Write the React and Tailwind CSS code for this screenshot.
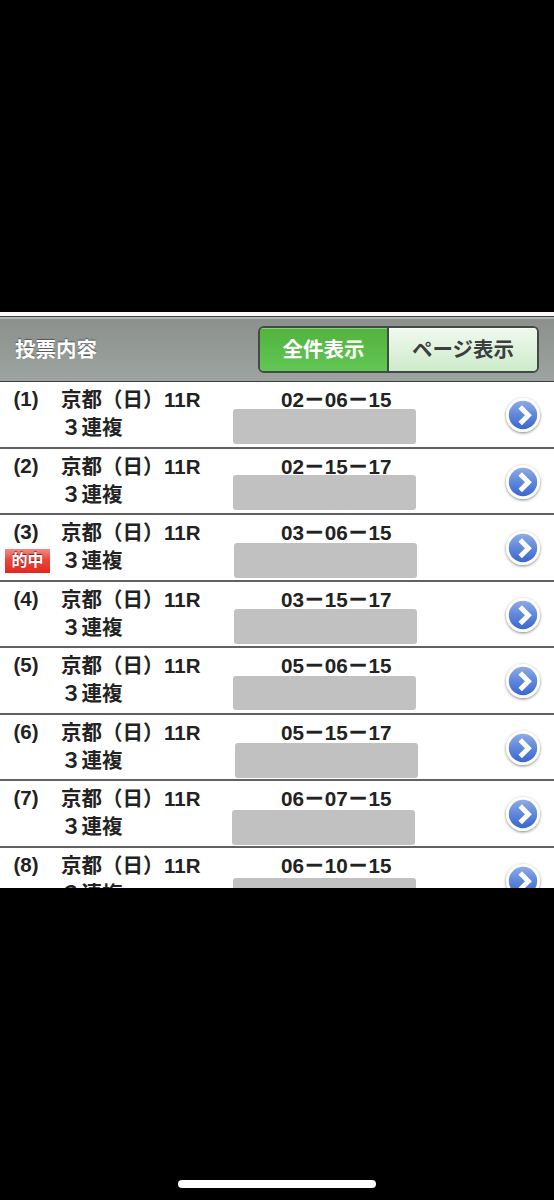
import React from 'react';

const tickets = [
  { no: 1, numbers: ['02', '06', '15'], mask: 'ml-[233.4px] mt-[-1px]' },
  { no: 2, numbers: ['02', '15', '17'], mask: 'ml-[233px] mt-[-1.5px]' },
  { no: 3, numbers: ['03', '06', '15'], mask: 'ml-[234px] mt-0', hit: true },
  { no: 4, numbers: ['03', '15', '17'], mask: 'ml-[234.4px] mt-[-0.5px]' },
  { no: 5, numbers: ['05', '06', '15'], mask: 'ml-[233.4px] mt-[-0.5px]' },
  { no: 6, numbers: ['05', '15', '17'], mask: 'ml-[235px] mt-[0.5px]' },
  { no: 7, numbers: ['06', '07', '15'], mask: 'ml-[231.5px] mt-px' },
  { no: 8, numbers: ['06', '10', '15'], mask: 'ml-[233.4px] mt-[2.5px]' },
];

const ArrowButton = () => (
  <svg width="42" height="44" viewBox="0 0 42 44" className="block">
    <defs>
      <linearGradient id="ball" x1="0" y1="0" x2="0" y2="1">
        <stop offset="0" stopColor="#8fabe6" />
        <stop offset="0.5" stopColor="#5f87da" />
        <stop offset="1" stopColor="#3a67d0" />
      </linearGradient>
      <filter id="shade" x="-20%" y="-20%" width="140%" height="150%">
        <feDropShadow dx="0" dy="1" stdDeviation="1.5" floodColor="#000" floodOpacity="0.5" />
      </filter>
    </defs>
    <circle cx="21" cy="20" r="17" fill="#fff" filter="url(#shade)" />
    <circle cx="21" cy="20" r="14.2" fill="url(#ball)" />
    <path d="M18.2 12 L26.4 20.2 L18.2 28.4" fill="none" stroke="#fff" strokeWidth="4.9" />
  </svg>
);

const Dash = () => <span className="[-webkit-text-stroke:0.7px_#222]">－</span>;

const TicketRow = ({ ticket }) => {
  const [first, second, third] = ticket.numbers;

  return (
    <li className="grid h-[66.5px] grid-cols-[minmax(0,1fr)] border-b-2 border-[#626262] bg-white">
      <div className="col-start-1 row-start-1 flex">
        <div className="w-[61px] shrink-0">
          <div className="h-[34px] pl-[13.5px] leading-[34px]">({ticket.no})</div>
          {ticket.hit && (
            <div className="ml-[5px] flex h-6 w-[45px] items-center justify-center bg-linear-to-b from-[#f08a84] via-[#e8453d] via-45% to-[#e5241d] text-[16px] text-white [text-shadow:0_-1px_1px_#8c1a14]">
              的中
            </div>
          )}
        </div>
        <div className="w-[220px] shrink-0 whitespace-nowrap pt-1">
          <div className="h-7 leading-[28.5px]">
            京都（日）<span className="pl-[0.5px]">11R</span>
          </div>
          <div className="h-7 leading-7">３連複</div>
        </div>
        <div className="whitespace-nowrap pt-1 text-[20.7px] leading-7">
          {first}
          <Dash />
          {second}
          <Dash />
          {third}
        </div>
      </div>
      <div className="col-start-1 row-start-1 pt-7">
        <div className={`h-[34.5px] w-[183px] rounded-[3px] bg-[#c1c1c1] ${ticket.mask}`} />
      </div>
      <div className="col-start-1 row-start-1 ml-auto mr-[10px] mt-[13px]">
        <ArrowButton />
      </div>
    </li>
  );
};

const App = () => {
  return (
    <div className="flex h-[1200px] w-[554px] flex-col overflow-hidden bg-black font-['Liberation_Sans','Noto_Sans_CJK_JP',sans-serif] text-[20.5px] font-bold text-[#222]">
      <main className="mt-[312px] h-[576px] shrink-0 overflow-hidden bg-white">
        <div className="h-1 bg-[#fbf6fa]" />
        <header className="flex h-[66px] items-center border-b border-t border-[#3d403e] bg-linear-to-b from-[#8b908c] to-[#9da3a0] pl-[15px] pr-[15px] shadow-[inset_0_2px_0_#b0b3b1]">
          <h1 className="pt-0.5 text-white [text-shadow:0_-1px_1px_#555]">投票内容</h1>
          <div className="ml-auto mt-px flex h-[47px] w-[281px] overflow-hidden rounded-md border-2 border-[#434944]">
            <button className="w-[129px] border-r-2 border-[#434944] bg-linear-to-b from-[#52b33c] to-[#62c656] pt-0.5 text-white shadow-[inset_0_1px_0_#8fcc82]">
              全件表示
            </button>
            <button className="flex-1 bg-linear-to-b from-[#f0f9ef] to-[#cdebcb] pt-0.5 text-[#3d3d3d] shadow-[inset_0_1px_0_#fff]">
              ページ表示
            </button>
          </div>
        </header>
        <ul>
          {tickets.map((ticket) => (
            <TicketRow key={ticket.no} ticket={ticket} />
          ))}
        </ul>
      </main>
      <div className="mx-auto mb-3 mt-auto h-2 w-[198px] rounded-full bg-white" />
    </div>
  );
};

export default App;
